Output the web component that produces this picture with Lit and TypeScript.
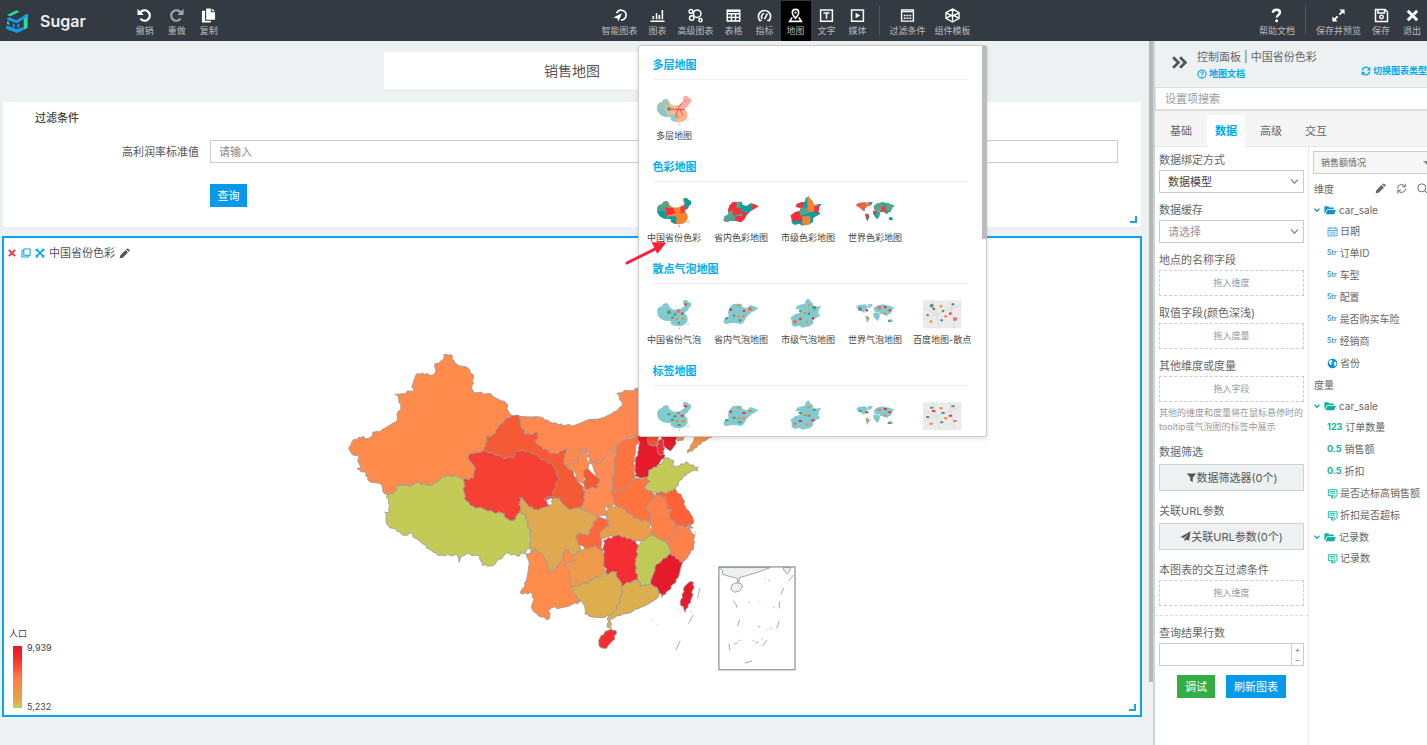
import { LitElement, html, svg, css, TemplateResult } from "lit";
import { customElement } from "lit/decorators.js";

type Pt = [number, number];

/* ---------- icons ---------- */

const ICONS: Record<string, TemplateResult> = {
  undo: svg`<path d="M3.2 5.2A5.6 5.6 0 1 1 3.6 11.4" fill="none" stroke="currentColor" stroke-width="2.3"/><path d="M.5 .8v6.600h6.600z" fill="currentColor"/>`,
  redo: svg`<path d="M12.8 5.2A5.6 5.6 0 1 0 12.4 11.4" fill="none" stroke="currentColor" stroke-width="2.3"/><path d="M15.500 .8v6.600H8.900z" fill="currentColor"/>`,
  copy: svg`<path d="M5.5 .5h5v4h4.500v8h-9.500z" fill="currentColor"/><path d="M11.5 .5l3.500 3h-3.500z" fill="currentColor"/><path d="M4.3 3H1V15.500h9.500v-2H4.3z" fill="currentColor"/>`,
  smart: svg`<path d="M5 5.5A5.2 5.2 0 1 1 9.5 12.8" fill="none" stroke="currentColor" stroke-width="1.8"/><path d="M10.5 5.5L7 14l-1.6-3.2L1.5 10z" fill="currentColor"/>`,
  bars: svg`<path d="M.5 14.2h15M3.5 12V8.5M7 12V5.5M10 12V7.5M13.2 12V2" fill="none" stroke="currentColor" stroke-width="1.7"/>`,
  bubbles: svg`<g fill="none" stroke="currentColor" stroke-width="1.6"><circle cx="9.8" cy="6" r="4"/><circle cx="3.2" cy="3.6" r="2"/><circle cx="4" cy="10.6" r="2.4"/><circle cx="13.3" cy="13" r="1.7"/></g>`,
  table: svg`<path d="M1.3 2.3h13.4v11.6H1.3zM1.3 6.2h13.4M1.3 10h13.4M5.8 6v8M10.2 6v8" fill="none" stroke="currentColor" stroke-width="1.5"/><path d="M1.3 2h13.4v2.2H1.3z" fill="currentColor"/>`,
  gauge: svg`<path d="M3.2 13.5a6.5 6.5 0 1 1 9.6 0M5.5 11.5a3.6 3.6 0 0 1 2-5.6M8 12l3-6" fill="none" stroke="currentColor" stroke-width="1.7"/><path d="M2 13.4h3M11 13.4h3" stroke="currentColor" stroke-width="1.5"/>`,
  mapPin: svg`<path d="M8 11C5.6 8.3 4.6 6.8 4.6 4.9a3.4 3.4 0 0 1 6.8 0C11.4 6.8 10.4 8.3 8 11z" fill="none" stroke="currentColor" stroke-width="1.7"/><circle cx="8" cy="4.9" r="1.2" fill="currentColor"/><path d="M4.5 10L1.8 14.300h12.400L11.5 10" fill="none" stroke="currentColor" stroke-width="1.7"/>`,
  textBox: svg`<path d="M1.7 2h12.6v12H1.7zM4.8 5.200h6.400M8 5.200v6.300" fill="none" stroke="currentColor" stroke-width="1.6"/>`,
  media: svg`<path d="M1.7 2h12.6v12H1.7z" fill="none" stroke="currentColor" stroke-width="1.6"/><path d="M6 5l5 3-5 3z" fill="currentColor"/>`,
  filterBox: svg`<path d="M1.7 2h12.6v12H1.7z" fill="none" stroke="currentColor" stroke-width="1.5"/><path d="M1.5 3.800h13M4 8h2M7 8h2M10 8h2M4 11h2M7 11h2M10 11h2" stroke="currentColor" stroke-width="1.5"/>`,
  cube: svg`<path d="M8 1l7 4v6l-7 4-7-4V5zM1 5l7 4 7-4M1 11l7-4 7 4M8 1v6M8 9v6" fill="none" stroke="currentColor" stroke-width="1.4"/>`,
  help: svg`<path d="M4.2 5C4.3 2.9 5.8 1.9 8 1.900s3.700 1.200 3.700 3C11.7 7.600 8.200 7.600 8.200 10.200" fill="none" stroke="currentColor" stroke-width="2.6"/><circle cx="8.1" cy="13.5" r="1.6" fill="currentColor"/>`,
  expand: svg`<path d="M9 1.500h5.500V7zM7 14.500H1.500V9z" fill="currentColor"/><path d="M12.5 3.500L9 7M3.500 12.500L7 9" stroke="currentColor" stroke-width="2"/>`,
  save: svg`<path d="M1.6 1.600h10.200l2.600 2.600v10.200H1.600zM4.200 1.600v3.600h7V1.600" fill="none" stroke="currentColor" stroke-width="1.6"/><circle cx="8" cy="9.6" r="1.9" fill="none" stroke="currentColor" stroke-width="1.5"/>`,
  close: svg`<path d="M3 3l10 10M13 3L3 13" stroke="currentColor" stroke-width="3.2"/>`,
  clone: svg`<path d="M4.5 1.500h10v10h-10zM4 4.500H1.500v10h10V12" fill="none" stroke="currentColor" stroke-width="1.7"/>`,
  arrows: svg`<path d="M1 1h5L1 6zM15 1v5l-5-5zM1 15v-5l5 5zM15 15h-5l5-5z" fill="currentColor"/><path d="M3 3l10 10M13 3L3 13" stroke="currentColor" stroke-width="2.6"/>`,
  pencil: svg`<path d="M1 15l1-4.500L9.500 3l3.500 3.500L5.500 14zM10.500 2l1.300-1a1.200 1.200 0 0 1 1.600 0l1.700 1.700a1.200 1.200 0 0 1 0 1.600l-1.200 1.200z" fill="currentColor"/>`,
  chevrons: svg`<path d="M2 3l5 5-5 5M8.500 3l5 5-5 5" fill="none" stroke="currentColor" stroke-width="2.6"/>`,
  question: svg`<circle cx="8" cy="8" r="6.5" fill="none" stroke="currentColor" stroke-width="1.8"/><path d="M5.8 6.300C6 4.900 6.900 4.500 8 4.500s2.100.7 2.100 1.800C10.100 7.800 8 7.900 8 9.500M8 10.800v1.600" fill="none" stroke="currentColor" stroke-width="1.7"/>`,
  refresh: svg`<path d="M2 7a6 6 0 0 1 10.500-3M14 9a6 6 0 0 1-10.500 3" fill="none" stroke="currentColor" stroke-width="2.2"/><path d="M15 1v6H9zM1 15V9h6z" fill="currentColor"/>`,
  sync: svg`<path d="M2 8a6 6 0 0 1 11-3M14 8a6 6 0 0 1-11 3M13.500 1v4.500H9M2.500 15v-4.500H7" fill="none" stroke="currentColor" stroke-width="1.4"/>`,
  search: svg`<circle cx="7" cy="7" r="5.8" fill="none" stroke="currentColor" stroke-width="1.4"/><path d="M11 11l4 4" stroke="currentColor" stroke-width="1.4"/>`,
  funnel: svg`<path d="M1 2h14l-5.200 6v7l-3.600-2.500V8z" fill="currentColor"/>`,
  plane: svg`<path d="M15.5.5L13 14l-4-1.700L6.500 15v-4L13 4 5 10.300.8 8.700z" fill="currentColor"/>`,
  caret: svg`<path d="M3 5.500l5 5 5-5" fill="none" stroke="currentColor" stroke-width="2.6"/>`,
  down: svg`<path d="M3 5l5 5.500L13 5" fill="none" stroke="currentColor" stroke-width="1.8"/>`,
  folder: svg`<path d="M.5 3h5l1.500 1.500h6V7H4L1.500 12H.5zM4.500 8h11.300l-2.300 5.500H2z" fill="currentColor"/>`,
  calendar: svg`<path d="M1.5 3h13v11.500h-13zM1.500 6.500h13M4.500 1v3M11.500 1v3M3.500 9h9M3.500 11.800h9" fill="none" stroke="currentColor" stroke-width="1"/>`,
  globe: svg`<circle cx="8" cy="8" r="7" fill="currentColor"/><path d="M3 4l4-1 1 2-2 2 1 2-2 1-2-3zM9.500 7l3-2 1.500 3-2 4-1.500-.5.300-2.500z" fill="#fff"/>`,
  calc: svg`<path d="M2 2.500h12.500v8.500L11 14.500H6.500V11H2zM4 5h8M4 7.500h8M8 10v3M10.500 9.500V13" fill="none" stroke="currentColor" stroke-width="1.3"/>`,
};

const icon = (name: string, size = 10) =>
  html`<svg class="icon" width=${size} height=${size} viewBox="0 0 16 16" aria-hidden="true">${ICONS[name]}</svg>`;

/* ---------- province map ---------- */

const parse = (s: string): number[][] => s.split(" ").map((p) => p.split(",").map(Number));

/* Breaks every border into short irregular steps. The offsets depend only on
   the end points, so two neighbours get the same shared border. */
function border(s: string): string {
  const pts = parse(s) as Pt[];
  const out: string[] = [];
  pts.forEach((a, i) => {
    const b = pts[(i + 1) % pts.length];
    const flip = a[0] > b[0] || (a[0] === b[0] && a[1] > b[1]);
    const [p, q] = flip ? [b, a] : [a, b];
    const dx = q[0] - p[0];
    const dy = q[1] - p[1];
    const len = Math.hypot(dx, dy);
    const n = Math.max(1, Math.round(len / 8));
    const seg: string[] = [];
    for (let k = 1; k < n; k++) {
      const h = Math.sin(p[0] * 12.9 + p[1] * 78.2 + q[0] * 3.7 + k * 37.7) * 43758.5;
      const off = (h - Math.floor(h) - 0.5) * 8;
      const x = p[0] + (dx * k) / n - (dy / len) * off;
      const y = p[1] + (dy * k) / n + (dx / len) * off;
      seg.push(`${x.toFixed(1)},${y.toFixed(1)}`);
    }
    if (flip) seg.reverse();
    out.push(`${a[0]},${a[1]}`, ...seg);
  });
  return out.join(" ");
}

const PROVINCES: [string, string][] = [
  ["#ff8b4c", "-228,-135 -206,-137 -204,-123 -188,-107 -156,-97 -138,-67 -144,-35 -138,-23 -85,-18 -46,3 -25,45 -62,75 -80,103 -98,107 -108,150 -155,167 -133,205 -137,233 -168,235 -195,225 -235,232 -250,245 -278,255 -312,245 -330,259 -365,255 -378,280 -395,282 -410,275 -414,252 -455,239 -460,217 -488,205 -478,203 -485,165 -502,163 -512,141 -502,123 -468,107 -464,115 -446,111 -440,95 -420,95 -370,65 -368,41 -356,29 -364,-10 -374,-17 -328,-27 -318,-27 -324,-39 -307,-81 -270,-75 -254,-81 -254,-110 -232,-120"],
  ["#c3ca56", "-395,282 -378,280 -365,255 -330,259 -312,245 -278,255 -250,245 -235,232 -195,225 -168,235 -166,295 -148,315 -110,325 -80,335 -46,340 -40,353 -25,360 -13,355 0,335 15,340 32,395 34,435 16,460 0,453 -2,467 -40,457 -80,495 -112,495 -120,467 -160,460 -175,467 -182,485 -186,465 -240,465 -264,450 -295,427 -328,397 -345,405 -395,375 -404,335 -390,335 -390,315 -400,290"],
  ["#ff8850", "-5,45 60,50 100,68 155,77 200,60 240,55 280,35 307,15 300,0 290,-20 354,-36 500,-40 500,60 354,108 320,115 290,135 245,180 235,190 212,188 200,145 180,150 175,182 130,200 120,170 60,165 30,130 15,103"],
  ["#f55a35", "-108,150 -98,107 -80,103 -62,75 -25,45 -5,45 15,103 55,97 55,115 45,125 65,140 95,160 120,155 140,145 135,170 130,190 150,200 172,240 190,260 195,300 175,330 148,328 125,305 120,290 100,295 80,300 -40,173"],
  ["#f64034", "-155,167 -108,150 -40,173 -20,173 -10,150 30,155 55,168 75,180 100,196 118,235 108,255 96,275 100,288 80,290 72,298 92,315 55,330 28,320 0,290 0,335 -13,355 -25,360 -40,353 -46,340 -80,335 -110,325 -148,315 -166,295 -168,235 -137,233 -133,205"],
  ["#ff8c52", "290,135 275,275 285,300 275,320 255,320 262,345 232,348 180,325 195,300 190,260 238,250 212,188 235,190 245,180 270,145"],
  ["#ff8c4a", "180,150 200,145 200,175 212,188 195,215 190,250 172,240 165,215 135,195 150,190 175,182"],
  ["#f55a35", "190,213 205,205 238,235 232,262 195,265"],
  ["#ff743e", "290,135 320,115 358,105 345,165 342,235 325,260 275,275"],
  ["#e51a2b", "355,100 390,100 386,130 410,138 418,160 435,165 420,185 410,200 380,232 345,228 345,195 355,150"],
  ["#f5503a", "385,100 420,100 410,135 386,132"],
  ["#ee2f3a", "412,122 432,115 432,160 422,165 412,155"],
  ["#e51a2b", "422,100 472,100 468,130 450,152 432,138"],
  ["#ff8c4a", "475,100 492,100 488,120 472,122"],
  ["#fb913f", "522,112 540,95 590,100 560,118 502,157 515,130"],
  ["#c3ca56", "410,200 430,180 440,172 460,180 455,198 470,200 498,184 510,195 535,200 532,212 515,212 500,220 480,240 465,265 440,280 405,275 380,275 372,260 390,243 380,232 385,210"],
  ["#ff743e", "342,235 380,232 390,243 372,260 400,280 405,295 378,318 392,345 390,365 355,355 325,340 305,320 285,315 275,275 325,260"],
  ["#ff8049", "400,280 435,290 440,320 455,328 448,350 470,376 452,410 440,425 396,402 395,385 390,365 392,345 378,318 405,295"],
  ["#ff6238", "405,275 440,280 465,265 485,290 498,325 520,360 515,372 498,382 470,376 448,350 455,328 440,320 435,290 410,285"],
  ["#ff8049", "470,376 500,382 522,402 520,440 505,465 488,485 450,460 440,425 452,410"],
  ["#ff8049", "505,368 520,382 503,383"],
  ["#ea9d4b", "262,318 305,320 325,340 355,355 390,365 396,402 370,420 345,420 290,405 240,418 240,395 268,375 258,350"],
  ["#e0a94f", "0,290 28,320 55,330 92,315 100,295 120,290 125,305 148,328 180,325 232,348 215,380 205,405 175,400 168,412 185,450 160,465 138,448 118,490 98,518 85,500 65,460 45,442 30,460 32,395 15,340 0,335"],
  ["#ff683a", "232,348 265,360 268,375 240,395 245,425 248,458 225,435 205,445 180,435 168,412 175,400 205,405 215,380"],
  ["#ef9b4b", "185,450 205,445 225,435 248,458 258,515 225,530 205,548 155,558 148,540 150,510 135,490 165,480 160,465"],
  ["#ff8c4a", "20,460 30,460 45,442 65,460 85,500 98,518 118,490 138,448 160,465 165,480 135,490 150,510 148,540 155,558 185,600 150,615 90,625 88,655 55,645 38,628 38,580 2,578 20,540 28,490"],
  ["#f62d33", "250,420 290,405 345,420 355,435 350,470 345,490 355,540 320,545 305,558 290,530 290,515 258,520 252,470"],
  ["#c0cb57", "355,435 380,415 396,402 440,425 450,460 425,480 405,500 392,550 360,558 355,540 345,490 350,470"],
  ["#e51a2b", "450,460 488,485 475,530 445,570 425,590 410,560 392,550 405,500 425,480"],
  ["#dcae4e", "155,558 205,548 225,530 258,520 290,515 290,530 305,558 308,570 297,610 275,640 255,650 215,648 195,640 190,610 170,595"],
  ["#dcae4e", "305,558 320,545 355,540 360,558 392,550 410,560 415,590 375,615 340,630 300,645 270,655 275,685 262,680 262,655 275,640 297,610 308,570"],
  ["#f62d33", "240,712 262,690 288,690 285,715 260,743 237,735"],
  ["#e51a2b", "510,543 520,545 515,590 495,635 480,605 490,565"],
];

const ISLANDS =
  "M539 562l-7 32M519 643l-14 26M480 720l-12 28M523 405l4-2M524 396l5 2M393 660l3 1M411 671l2 3M512 633l3 1M350 625l9-3";

const INSET =
  "M265 75L280 58M241 116L251 96M237 138v20M229 218L237 196M187 270L200 253M99 135Q108 142 110 156M112 212L118 192M86 265L89 284M133 322L155 316M194 70h3M204 74l5 3M145 138l3 5M177 139h3M218 154h4M174 215l5-3M201 222h3M211 218h4M102 266l10-6M117 254h4M157 253l4 2M166 262l9-4M182 250h4";

const chinaMap = () => html`
  <svg class="geo" viewBox="65 267 1074 447" role="img" aria-label="中国省份色彩">
    <g transform="translate(520 400) scale(.33333)" stroke="#999" stroke-width="2.6" stroke-linejoin="round">
      ${PROVINCES.map(([fill, pts]) => svg`<polygon fill=${fill} points=${border(pts)}/>`)}
      <path d=${ISLANDS} fill="none" stroke-width="2.4"/>
    </g>
    <g transform="translate(700 555) scale(.33333)" stroke="#999" stroke-width="2.6" fill="#edf1f2">
      <path d="M56 36h154L190 44 165 52 140 60 118 66 116 80 112 80 112 68 85 62 68 56 66 44z"/>
      <path d="M95 88L105 82 122 84 127 94 118 106 104 110 92 102z"/>
      <path d="M248 36L272 36 268 46 260 55 252 46z"/>
      <path d=${INSET} fill="none"/>
      <rect x="56" y="34" width="228" height="308" fill="none" stroke-width="4"/>
    </g>
  </svg>`;

/* ---------- menu thumbnails ---------- */

const SHAPES: Record<string, string> = {
  china: "M6 42L12 32 22 29 24 23 34 20 40 24 44 33 56 40 70 40 82 34 90 27 85 23 84 15 88 10 96 12 102 18 109 20 108 30 102 34 99 42 91 47 88 52 95 57 98 66 97 76 90 84 82 88 70 90 58 88 48 83 47 74 36 74 24 72 14 65 8 56zM72 94l4-1-1 5-4-1zM98 80l3-1-1 8-3-2z",
  province: "M22 34L32 24 44 22 58 22 62 32 74 36 86 26 96 30 110 36 100 42 86 50 74 62 66 76 56 84 44 80 28 80 12 84 4 78 8 66 20 60 18 48z",
  city: "M58 6L66 16 72 22 74 32 98 28 90 38 88 52 94 58 80 66 72 72 72 82 62 90 50 92 40 94 30 88 18 92 8 86 8 72 4 64 18 54 32 50 36 40 20 38 24 28 38 24 48 22 50 12z",
  world: "M0 32L8 26 28 24 36 32 32 38 26 42 26 50 20 48 12 40 4 36zM34 24L50 23 46 32 38 36zM28 58L38 60 40 68 34 80 30 70zM52 50L64 48 72 54 70 66 64 74 58 68 52 60zM53 36L62 28 80 24 100 28 116 34 108 40 104 52 98 54 92 60 84 52 74 54 68 48 56 46zM98 70L106 67 112 76 100 78z",
};

const PATCHES = "M0 0h40l4 36-22 20H0z|M0 50h30l10 30H0z|M30 40h26l6 16-28 8z|M54 0h26l6 40-20 16-10-8z|M88 0h30v50H88z|M60 54h32v40H66z|M40 66h24v30H40z|M76 36h14v20H76z";
const TINTS: Record<string, string[]> = {
  china: ["#58a288", "#0a9f9f", "#fb2c3e", "#f5832f", "#0a9f9f", "#f5832f", "#0a9f9f", "#fb3a40", "#f5832f"],
  province: ["#fb2c3e", "#58a288", "#fb2c3e", "#0a9f9f", "#fb3038", "#fb2c3e", "#fb2c3e", "#0a9f9f", "#58a288"],
  city: ["#fb2c3e", "#fb2c3e", "#58a288", "#f5832f", "#0a9f9f", "#0a9f9f", "#f5832f", "#fb2c3e", "#0a9f9f"],
  world: ["#f5633e", "#fb2c3e", "#fb2c3e", "#58a288", "#58a288", "#58a288", "#0a9f9f", "#fb3a40", "#0a9f9f"],
  layers: ["#9cc7b4", "#7fc9cf", "#f8b58a", "#f8bd96", "#f9a9a2", "#f8b58a", "#8ccdd0", "#fba9a2", "#f8bd96"],
};

const SPOTS: Record<string, string> = {
  china: "92,24,0 42,48,2 70,44,3 82,52,0 66,68,1 84,68,1 52,64,2 72,80,2 60,54,2",
  province: "50,28,1 84,38,3 66,44,0 50,60,1 14,66,2 36,58,2 54,72,2 64,60,1 26,40,0",
  city: "76,34,2 60,26,1 48,50,1 34,44,2 18,76,3 54,78,1 72,66,0 34,68,0 60,52,2",
  world: "12,38,2 32,42,0 70,34,3 88,32,0 102,42,0 86,52,1 36,66,1 100,74,2",
  baidu: "26,28,2 54,30,1 32,38,0 60,44,2 14,56,2 68,60,1 82,52,0 96,68,3 24,76,1 56,72,2 90,24,2",
};
const SPOT_COLORS = ["#e8364a", "#f08a30", "#58997e", "#f3705c"];

function spot([x, y, c]: number[], i: number, mode: string) {
  const fill = SPOT_COLORS[c];
  return mode === "label"
    ? svg`<rect x=${x - 5} y=${y - 3} width="10" height="6" rx="1" fill=${fill}/>`
    : svg`<circle cx=${x} cy=${y} r=${c === 3 || (c === 2 && i < 2) ? 6 : 4} fill=${fill}/>`;
}

function thumb(kind: string, mode: string) {
  const id = `${kind}-${mode}`;
  const tints = TINTS[mode === "layers" ? "layers" : kind];
  const filled = mode === "color" || mode === "layers";
  return html`<svg class="thumb" viewBox="0 0 117 100" aria-hidden="true">
    ${kind === "baidu"
      ? svg`<path d="M0 12h115v84H0z" fill="#ebebeb"/><path d="M0 70L115 24M30 12L50 96M80 12L95 96M0 34L60 64" stroke="#dcdcdc" stroke-width="3"/>`
      : filled
        ? svg`<defs><clipPath id=${id}><path d=${SHAPES[kind]}/></clipPath></defs><path d=${SHAPES[kind]} fill=${tints[8]}/><g clip-path="url(#${id})">${PATCHES.split("|").map((d, i) => svg`<path d=${d} fill=${tints[i]}/>`)}</g>`
        : svg`<path d=${SHAPES[kind]} fill="#82cad0"/>`}
    ${mode === "layers"
      ? svg`<path d="M42 50L88 52M68 50l10-16 14-10M68 50l-6 24M74 50l10 20" stroke="#e8364a" stroke-width="2.5" fill="none"/><circle cx="42" cy="50" r="6" fill="#58997e"/><circle cx="68" cy="74" r="4" fill="#f08a30"/>`
      : ""}
    ${filled ? "" : parse(SPOTS[kind]).map((p, i) => spot(p, i, mode))}
  </svg>`;
}

const MENU = [
  { title: "多层地图", mode: "layers", items: [["china", "多层地图"]] },
  { title: "色彩地图", mode: "color", items: [["china", "中国省份色彩"], ["province", "省内色彩地图"], ["city", "市级色彩地图"], ["world", "世界色彩地图"]] },
  { title: "散点气泡地图", mode: "bubble", items: [["china", "中国省份气泡"], ["province", "省内气泡地图"], ["city", "市级气泡地图"], ["world", "世界气泡地图"], ["baidu", "百度地图-散点"]] },
  { title: "标签地图", mode: "label", items: [["china", ""], ["province", ""], ["city", ""], ["world", ""], ["baidu", ""]] },
];

/* Rules that every part of the editor shares. */
const base = css`
  *, *::before, *::after { box-sizing: border-box; }
  button, input, select { font: inherit; color: inherit; margin: 0; }
  button { border: 0; padding: 0; background: none; }
  a { color: inherit; text-decoration: none; }
  ul, h1, h2, h3, p { list-style: none; margin: 0; padding: 0; }
  .icon { display: block; flex: none; }
`;

@customElement("map-menu")
class MapMenu extends LitElement {
  static styles = [base, css`
    :host { display: block; position: relative; }
    .sheet { height: 392px; overflow: hidden; padding-left: 2px; background: #fff; border: 1px solid #ccc; border-radius: 3px; box-shadow: 0 2px 5px #0002; color: #444; }
    section { height: 102px; }
    h3 { margin: 0 18px 0 12px; height: 34px; padding-top: 9px; line-height: 20px; font-size: 11px; font-weight: 700; color: #00adee; border-bottom: 1px solid #eee; }
    ul { display: flex; padding-top: 12px; }
    li { width: 67px; flex: none; }
    button { display: flex; flex-direction: column; align-items: center; width: 100%; white-space: nowrap; font-size: 9px; line-height: 14px; gap: 3px; }
    .thumb { width: 39px; height: 34px; display: block; }
    .bar { position: absolute; right: 0; top: 1px; width: 5px; height: 193px; background: #bbb; }
    .arrow { position: absolute; left: -14px; top: 194px; width: 44px; height: 26px; }
  `];
  render() {
    return html`
      <div class="sheet">
        ${MENU.map((s) => html`<section><h3>${s.title}</h3><ul>
          ${s.items.map(([kind, name]) => html`<li><button aria-label=${name || s.title}>${thumb(kind, s.mode)}${name ? html`<span>${name}</span>` : ""}</button></li>`)}
        </ul></section>`)}
      </div>
      <div class="bar"></div>
      <svg class="arrow" viewBox="0 0 44 26" aria-hidden="true">
        <path d="M3 24L35 8" stroke="#f8203c" stroke-width="3" stroke-linecap="round"/>
        <path d="M28 4L41 4 33 14" fill="#f8203c" stroke="#f8203c" stroke-width="1.5" stroke-linejoin="round"/>
      </svg>`;
  }
}

@customElement("app-header")
class AppHeader extends LitElement {
  static styles = [base, css`
    :host { display: flex; align-items: center; height: 41px; background: #333a42; color: #fff; position: relative; z-index: 5; font-size: 9px; }
    .brand { display: flex; align-items: center; flex: 4 0 auto; padding-left: 5px; }
    .logo { width: 24px; height: 24px; }
    .name { font-size: 16px; font-weight: 600; line-height: 20px; margin: 0 44px 0 11px; color: #eee; }
    .group { display: flex; align-items: center; gap: 1px; }
    .edit { gap: 2px; }
    .tail { flex: 3 0 auto; justify-content: flex-end; }
    .tool { display: flex; flex-direction: column; align-items: center; gap: 2px; min-width: 30px; height: 40px; padding: 7px 4px 0; line-height: 12px; white-space: nowrap; }
    .tool span { color: #bbb; }
    .dim .icon { opacity: .55; }
    .active { background: #000; }
    .slot { position: relative; }
    map-menu { position: absolute; left: -143px; top: 44px; width: 349px; }
    .rule { width: 1px; height: 29px; margin: 0 5px; background: #50565d; }
  `];
  tool(glyph: string, name: string, cls = "") {
    return html`<button class="tool ${cls}">${icon(glyph, 15)}<span>${name}</span></button>`;
  }
  render() {
    return html`
      <div class="brand">
        <svg class="logo" viewBox="0 0 72 72" aria-hidden="true">
          <path d="M6 18L34 4 44 8 16 22z" fill="#1be29c"/>
          <path d="M56 20L68 14V56L56 62z" fill="#1be29c"/>
          <path d="M6 27L14 25 34 34 66 15 66 24 36 43 8 34z" fill="#179bf0"/>
          <path d="M4 49L36 61 56 54 56 62 36 72 4 60z" fill="#179bf0"/>
          <path d="M6 37l7 3v8l-7-3z" fill="#1be29c"/>
          <path d="M23 43l6 2v11l-6-3zM37 46l6-2v11l-6 3z" fill="#179bf0"/>
        </svg>
        <span class="name">Sugar</span>
        <div class="group edit">${this.tool("undo", "撤销")}${this.tool("redo", "重做", "dim")}${this.tool("copy", "复制")}</div>
      </div>
      <nav class="group">
        ${this.tool("smart", "智能图表")}${this.tool("bars", "图表")}${this.tool("bubbles", "高级图表")}${this.tool("table", "表格")}${this.tool("gauge", "指标")}
        <div class="slot">${this.tool("mapPin", "地图", "active")}<map-menu></map-menu></div>
        ${this.tool("textBox", "文字")}${this.tool("media", "媒体")}
        <span class="rule"></span>
        ${this.tool("filterBox", "过滤条件")}${this.tool("cube", "组件模板")}
      </nav>
      <div class="group tail">
        ${this.tool("help", "帮助文档")}<span class="rule"></span>${this.tool("expand", "保存并预览")}${this.tool("save", "保存")}${this.tool("close", "退出")}
      </div>`;
  }
}

@customElement("report-canvas")
class ReportCanvas extends LitElement {
  static styles = [base, css`
    :host { display: block; padding: 11px 7px 27px 2px; font-size: 11px; line-height: 20px; }
    .title { width: 376px; max-width: 100%; height: 37px; margin: 0 auto 13px; display: grid; place-items: center; background: #fff; font-size: 14px; font-weight: 400; color: #555; }
    .filters { position: relative; margin: 0 1px 9px; padding: 6px 23px 20px 32px; background: #fff; border-radius: 2px; }
    .filters h2 { font-size: 11px; font-weight: 500; color: #444; margin-bottom: 12px; }
    .row { display: grid; grid-template-columns: 164px 1fr; column-gap: 11px; row-gap: 21px; align-items: center; }
    .row label { text-align: right; color: #555; }
    .row input { height: 23px; border: 1px solid #ccc; padding: 0 8px; width: 100%; background: #fff; }
    input::placeholder { color: #888; }
    .go { grid-column: 2; justify-self: start; width: 37px; height: 23px; background: #079ae8; color: #fff; }
    .chart { position: relative; border: 2px solid #0aa5ea; background: #fff; }
    .bar { display: flex; align-items: center; gap: 4px; padding: 5px 3px 4px; color: #555; }
    .red { color: #f5394b; }
    .blue { color: #08a6e8; }
    .bar h2 { font-size: 11px; font-weight: 400; }
    .body { display: flex; align-items: flex-end; }
    .geo { flex: 1; min-width: 0; display: block; }
    .legend { width: 60px; flex: none; padding: 0 0 2px 5px; color: #444; font-size: 9px; line-height: 14px; }
    .scale { display: flex; gap: 5px; height: 72px; padding-left: 4px; }
    .ramp { width: 9px; height: 62px; margin-top: 5px; background: linear-gradient(#e51a2b, #f63232 20%, #ff7c40 50%, #e2a84e 88%, #c3ca56 96%, #c3ca56); border-top: 2px solid #e51a2b; }
    .ends { display: flex; flex-direction: column; justify-content: space-between; line-height: 13px; }
    .grip { position: absolute; right: 4px; bottom: 4px; width: 7px; height: 7px; border: solid #1aa5e2; border-width: 0 2px 2px 0; }
  `];
  render() {
    return html`
      <h1 class="title">销售地图</h1>
      <section class="filters">
        <h2>过滤条件</h2>
        <div class="row">
          <label for="rate">高利润率标准值</label><input id="rate" type="text" placeholder="请输入">
          <button class="go">查询</button>
        </div>
        <span class="grip"></span>
      </section>
      <section class="chart">
        <div class="bar">
          <button class="red" aria-label="删除">${icon("close", 10)}</button>
          <button class="blue" aria-label="克隆">${icon("clone", 10)}</button>
          <button class="blue" aria-label="全屏">${icon("arrows", 10)}</button>
          <h2>中国省份色彩</h2>
          <button aria-label="编辑">${icon("pencil", 11)}</button>
        </div>
        <div class="body">
          <div class="legend">人口
            <div class="scale"><div class="ramp"></div><div class="ends"><span>9,939</span><span>5,232</span></div></div>
          </div>
          ${chinaMap()}
        </div>
        <span class="grip"></span>
      </section>`;
  }
}

@customElement("control-panel")
class ControlPanel extends LitElement {
  static styles = [base, css`
    :host { display: block; width: 272px; overflow: hidden; font-size: 11px; line-height: 20px; color: #666; background: #fff; }
    header { display: flex; gap: 9px; height: 46px; padding: 6px 0 0 16px; background: #edf1f2; }
    header .fold { height: 30px; color: #555; }
    .names { flex: 1; white-space: nowrap; display: flex; flex-direction: column; align-items: flex-start; }
    .names h2 { font-size: 11px; font-weight: 400; line-height: 20px; }
    .link { display: inline-flex; align-items: center; gap: 2px; color: #00a8ea; font-size: 9px; line-height: 14px; font-weight: 600; white-space: nowrap; }
    .switch { align-self: flex-start; margin-top: 17px; }
    .find { display: block; width: 100%; height: 24px; padding: 0 9px; border: solid #ddd; border-width: 1px 0 2px 1px; background: #fff; }
    .find::placeholder { color: #999; }
    .tabs { display: flex; height: 36px; padding: 4px 0 0 7px; background: #f5f5f5; border-bottom: 1px solid #e8e8e8; gap: 7px; }
    .tabs button { width: 38px; height: 32px; }
    .tabs .on { background: #fff; color: #00a8ea; font-weight: 700; }
    .cols { display: flex; min-height: 598px; }
    .form { width: 154px; flex: none; padding: 3px 4px 0 4px; border-right: 1px solid #e8e8e8; }
    .field { display: flex; flex-direction: column; margin-bottom: 7px; white-space: nowrap; }
    .wide { gap: 2px; margin-bottom: 10px; }
    .pick { position: relative; }
    .pick select { display: block; appearance: none; width: 100%; height: 23px; padding: 0 8px; border: 1px solid #ccc; border-radius: 0; background: #fff; color: #444; }
    .pick .empty { color: #999; }
    .pick .icon { position: absolute; right: 4px; top: 6px; color: #888; pointer-events: none; }
    .drop { height: 26px; border: 1px dashed #ccc; display: grid; place-items: center; color: #999; font-size: 9px; }
    .hint { font-size: 9px; line-height: 14px; color: #999; margin: -3px 0 8px; }
    .block { height: 27px; border: 1px solid #ccd1d3; background: #edf1f2; display: flex; align-items: center; justify-content: center; width: 100%; color: #555; }
    .cut { border: 0; border-top: 1px dashed #ddd; margin: 9px -4px 7px; }
    .num { display: flex; height: 23px; border: 1px solid #ccc; }
    .num input { flex: 1; min-width: 0; border: 0; background: #fff; padding: 0 6px; }
    .steps { display: flex; flex-direction: column; width: 12px; border-left: 1px solid #ccc; }
    .steps button { flex: 1; font-size: 9px; line-height: 9px; color: #888; }
    .acts { display: flex; justify-content: center; gap: 11px; margin-top: 9px; color: #fff; }
    .acts button { height: 23px; padding: 0 8px; }
    .debug { background: #35ad47; }
    .redraw { background: #079ae8; }
    .fields { flex: 1; min-width: 0; padding: 4px 0 0 4px; font-size: 10px; white-space: nowrap; }
    .model { display: flex; align-items: center; height: 23px; border: 1px solid #ccc; border-right: 0; background: #f7f7f7; position: relative; margin-bottom: 4px; }
    .model select { appearance: none; border: 0; background: none; width: 100%; height: 100%; padding: 0 7px; font-size: 9px; }
    .model::after { content: ""; position: absolute; right: -4px; top: 9px; border: 4px solid transparent; border-top-color: #888; }
    .head { display: flex; align-items: center; height: 21px; padding-left: 1px; }
    .head div { display: flex; gap: 10px; margin-left: auto; margin-right: -1px; }
    .folder { display: flex; align-items: center; gap: 4px; height: 21px; }
    .folder .icon { margin-right: -1px; }
    .leaf { display: flex; align-items: center; gap: 2px; height: 22px; padding-left: 14px; }
    .leaf b { font-size: 9px; margin-right: 1px; }
    .leaf small { font-size: 7px; font-weight: 500; line-height: 12px; margin-right: 1px; }
    .dim .icon, .dim b, .dim small { color: #0e92d4; }
    .mea .icon, .mea b { color: #0bb4a0; }
    .name { color: #666; }
  `];
  drop(label: string, text: string) {
    return html`<div class="field"><span>${label}</span><div class="drop">${text}</div></div>`;
  }
  pick(id: string, label: string, value: string, cls = "") {
    return html`<div class="field"><label for=${id}>${label}</label><div class="pick"><select id=${id} class=${cls}><option>${value}</option></select>${icon("down", 11)}</div></div>`;
  }
  folder(name: string) {
    return html`<div class="folder">${icon("caret", 8)}${icon("folder", 12)}<span class="name">${name}</span></div>`;
  }
  leaf(mark: TemplateResult, name: string) {
    return html`<li class="leaf">${mark}<span class="name">${name}</span></li>`;
  }
  render() {
    const str = html`<small>Str</small>`;
    return html`
      <header>
        <button class="fold" aria-label="收起">${icon("chevrons", 17)}</button>
        <div class="names"><h2>控制面板 | 中国省份色彩</h2><a class="link" href="#doc">${icon("question", 10)}地图文档</a></div>
        <a class="link switch" href="#type">${icon("refresh", 10)}切换图表类型</a>
      </header>
      <input class="find" type="text" placeholder="设置项搜索" aria-label="设置项搜索">
      <div class="tabs"><button>基础</button><button class="on">数据</button><button>高级</button><button>交互</button></div>
      <div class="cols">
        <div class="form">
          ${this.pick("bind", "数据绑定方式", "数据模型")}
          ${this.pick("cache", "数据缓存", "请选择", "empty")}
          ${this.drop("地点的名称字段", "拖入维度")}
          ${this.drop("取值字段(颜色深浅)", "拖入度量")}
          ${this.drop("其他维度或度量", "拖入字段")}
          <p class="hint">其他的维度和度量将在鼠标悬停时的tooltip或气泡图的标签中展示</p>
          <div class="field wide"><span>数据筛选</span><button class="block">${icon("funnel", 11)}数据筛选器(0个)</button></div>
          <div class="field wide"><span>关联URL参数</span><button class="block">${icon("plane", 11)}关联URL参数(0个)</button></div>
          ${this.drop("本图表的交互过滤条件", "拖入维度")}
          <hr class="cut">
          <label for="rows">查询结果行数</label>
          <div class="num"><input id="rows" type="text"><div class="steps"><button>+</button><button>−</button></div></div>
          <div class="acts"><button class="debug">调试</button><button class="redraw">刷新图表</button></div>
        </div>
        <div class="fields">
          <div class="model"><select aria-label="数据模型"><option>销售额情况</option></select></div>
          <div class="head">维度<div>${icon("pencil", 11)}${icon("sync", 11)}${icon("search", 11)}</div></div>
          <div class="dim">
            ${this.folder("car_sale")}
            <ul>
              ${this.leaf(icon("calendar", 11), "日期")}
              ${["订单ID", "车型", "配置", "是否购买车险", "经销商"].map((n) => this.leaf(str, n))}
              ${this.leaf(icon("globe", 11), "省份")}
            </ul>
          </div>
          <div class="head">度量</div>
          <div class="mea">
            ${this.folder("car_sale")}
            <ul>
              ${this.leaf(html`<b>123</b>`, "订单数量")}
              ${this.leaf(html`<b>0.5</b>`, "销售额")}
              ${this.leaf(html`<b>0.5</b>`, "折扣")}
              ${this.leaf(icon("calc", 11), "是否达标高销售额")}
              ${this.leaf(icon("calc", 11), "折扣是否超标")}
            </ul>
            ${this.folder("记录数")}
            <ul>${this.leaf(icon("calc", 11), "记录数")}</ul>
          </div>
        </div>
      </div>`;
  }
}

@customElement("app-root")
class AppRoot extends LitElement {
  static styles = css`
    :host { display: flex; flex-direction: column; min-height: 100vh; background: #edf1f2; font-family: Inter, "Noto Sans CJK SC", sans-serif; }
    main { display: flex; flex: 1; }
    report-canvas { flex: 1; min-width: 0; }
    .track { box-sizing: border-box; width: 6px; flex: none; border-right: 2px solid #d0d3d4; }
    .knob { height: 91%; background: #b5b8b8; }
    control-panel { flex: none; }
  `;
  render() {
    return html`
      <app-header></app-header>
      <main><report-canvas></report-canvas><div class="track"><div class="knob"></div></div><control-panel></control-panel></main>`;
  }
}
